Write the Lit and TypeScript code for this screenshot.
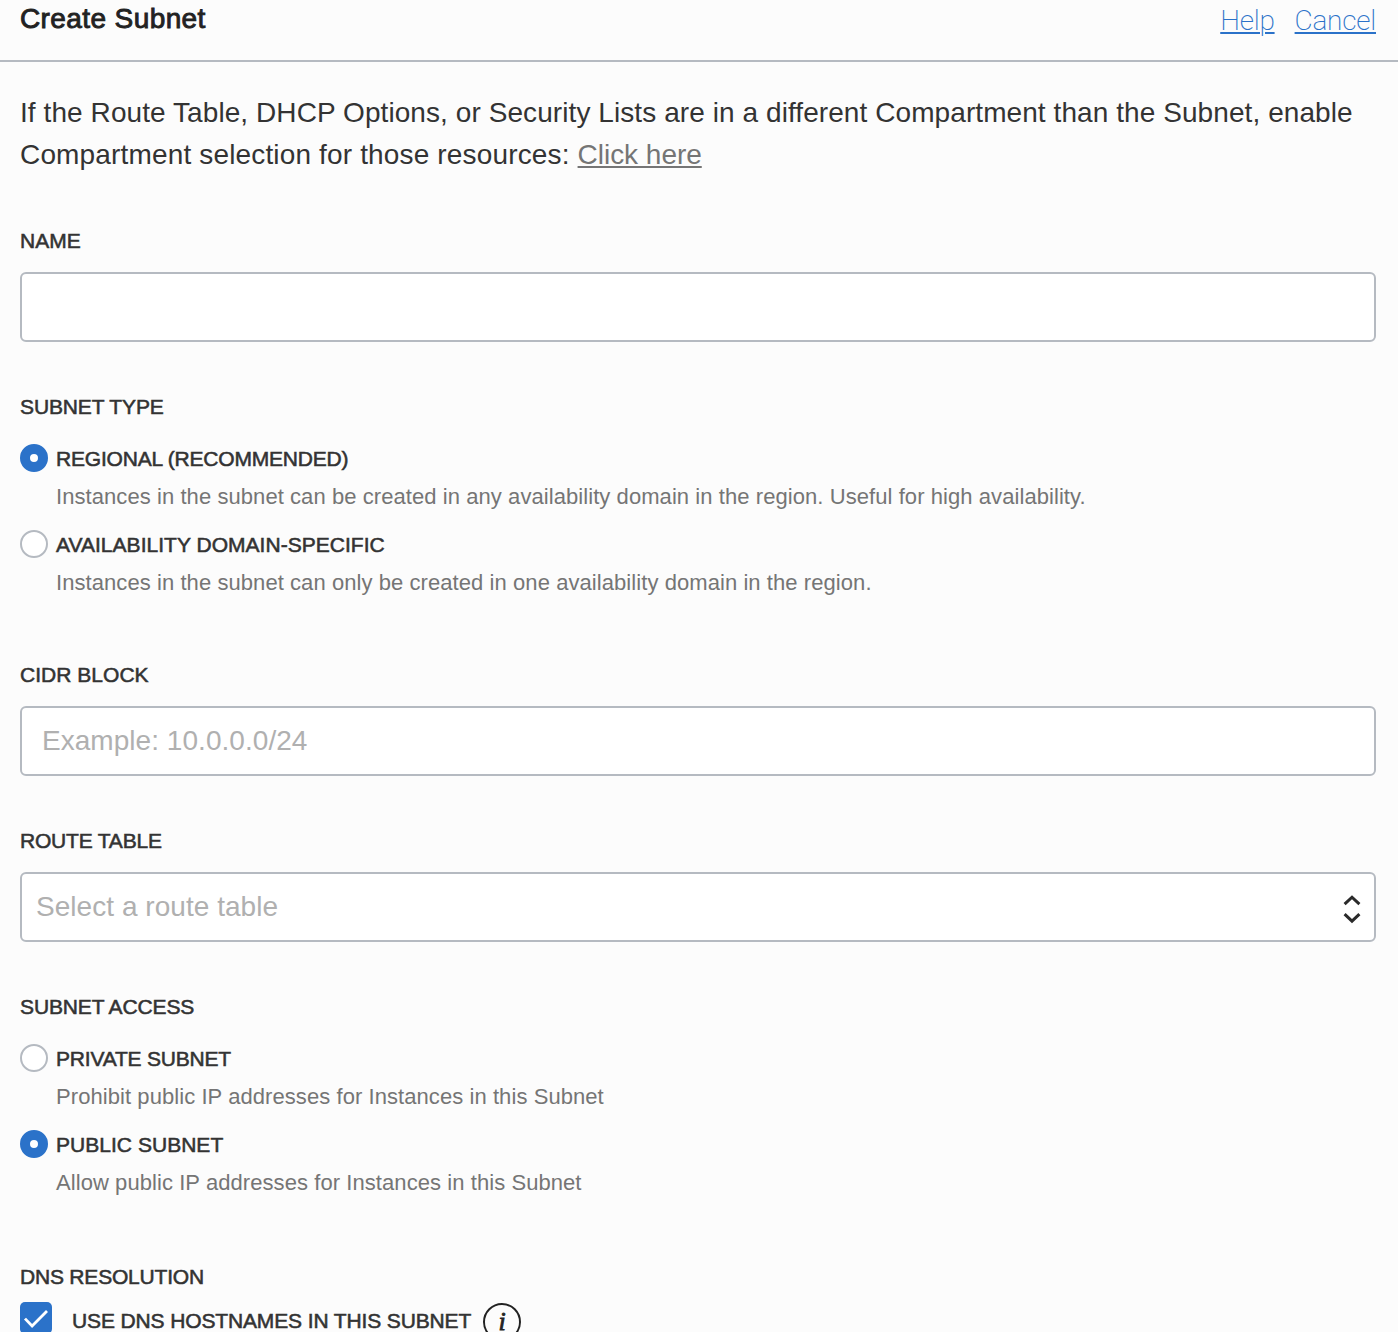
import { LitElement, html, css, svg, nothing } from 'lit';
import { customElement, property, state } from 'lit/decorators.js';
import { classMap } from 'lit/directives/class-map.js';

interface Choice {
  id: string;
  label: string;
  hint: string;
  tracking: '' | 'tight' | 'snug';
}

const subnetTypes: Choice[] = [
  {
    id: 'regional',
    label: 'REGIONAL (RECOMMENDED)',
    hint: 'Instances in the subnet can be created in any availability domain in the region. Useful for high availability.',
    tracking: 'tight',
  },
  {
    id: 'ad',
    label: 'AVAILABILITY DOMAIN-SPECIFIC',
    hint: 'Instances in the subnet can only be created in one availability domain in the region.',
    tracking: '',
  },
];

const accessTypes: Choice[] = [
  {
    id: 'private',
    label: 'PRIVATE SUBNET',
    hint: 'Prohibit public IP addresses for Instances in this Subnet',
    tracking: 'tight',
  },
  {
    id: 'public',
    label: 'PUBLIC SUBNET',
    hint: 'Allow public IP addresses for Instances in this Subnet',
    tracking: '',
  },
];

const labelStyles = css`
  .label {
    font-size: 21px;
    line-height: 24px;
    color: #333;
    -webkit-text-stroke: 0.55px #333;
    white-space: nowrap;
    letter-spacing: 0.03px;
  }
  .snug {
    letter-spacing: -0.13px;
  }
  .tight {
    letter-spacing: -0.2px;
  }
`;

@customElement('radio-group')
export class RadioGroup extends LitElement {
  @property({ attribute: false }) choices: Choice[] = [];
  @property() value = '';

  static styles = [
    labelStyles,
    css`
      :host {
        display: flex;
        flex-direction: column;
        gap: 21px;
      }
      .choice {
        display: grid;
        grid-template-columns: 28px 1fr;
        column-gap: 8px;
        row-gap: 13px;
        cursor: pointer;
      }
      .dot {
        box-sizing: border-box;
        width: 28px;
        height: 28px;
        border: 2px solid #b5bac1;
        border-radius: 50%;
        background: #fff;
      }
      .dot.on {
        border: 10px solid #2b72c9;
      }
      .label {
        line-height: 28px;
        padding-top: 1px;
        height: 27px;
      }
      .hint {
        grid-column: 2;
        font-size: 22px;
        line-height: 24px;
        letter-spacing: 0.07px;
        color: #757575;
        white-space: nowrap;
      }
    `,
  ];

  render() {
    return this.choices.map(
      (c) => html`
        <div class="choice" @click=${() => (this.value = c.id)}>
          <span class=${classMap({ dot: true, on: c.id === this.value })}></span>
          <span class=${classMap({ label: true, tight: c.tracking === 'tight', snug: c.tracking === 'snug' })}>${c.label}</span>
          <span class="hint">${c.hint}</span>
        </div>
      `,
    );
  }
}

@customElement('app-root')
export class AppRoot extends LitElement {
  @state() private dns = true;

  static styles = [
    labelStyles,
    css`
      :host {
        display: block;
        box-sizing: border-box;
        height: 1332px;
        overflow: hidden;
        background: #fcfcfc;
        color: #333;
        font-family: 'Liberation Sans', Arial, sans-serif;
      }
      .header {
        box-sizing: border-box;
        display: flex;
        justify-content: space-between;
        height: 62px;
        padding: 0 22px 0 20px;
        border-bottom: 2px solid #b5bac1;
      }
      .title {
        margin: 0;
        padding-top: 3px;
        font-size: 28px;
        font-weight: 400;
        line-height: 32px;
        letter-spacing: 0.4px;
        color: #222;
        -webkit-text-stroke: 0.9px #222;
      }
      .links {
        display: flex;
        gap: 20px;
        padding-top: 5px;
      }
      .link {
        font-family: Roboto, sans-serif;
        font-size: 28px;
        font-weight: 200;
        line-height: 32px;
        letter-spacing: -0.25px;
        color: #2b72c9;
        text-decoration: underline;
        text-decoration-thickness: 2px;
        text-underline-offset: 2px;
      }
      .intro {
        margin: 0;
        padding: 30px 20px 0;
        height: 84px;
        font-size: 28px;
        line-height: 42px;
        letter-spacing: 0.077px;
        white-space: nowrap;
      }
      .second {
        letter-spacing: 0.155px;
      }
      .here {
        color: #757575;
        letter-spacing: -0.03px;
        text-decoration: underline;
        text-decoration-thickness: 2px;
        text-underline-offset: 2px;
      }
      .form {
        display: flex;
        flex-direction: column;
        gap: 53px;
        padding: 53px 22px 0 20px;
      }
      .field {
        display: flex;
        flex-direction: column;
        gap: 19px;
      }
      .choices {
        gap: 25px;
        margin-bottom: 15px;
      }
      .choices.last {
        margin-bottom: 17px;
      }
      .box {
        box-sizing: border-box;
        display: flex;
        align-items: center;
        justify-content: space-between;
        height: 70px;
        padding: 0 20px;
        border: 2px solid #b5bac1;
        border-radius: 6px;
        background: #fff;
        color: #b0b0b0;
        font-size: 28px;
        line-height: 32px;
        letter-spacing: 0.04px;
      }
      .select {
        padding: 0 13px 0 14px;
      }
      .chevrons {
        width: 18px;
        height: 32px;
        padding-top: 4px;
      }
      .dns {
        gap: 13px;
      }
      .row {
        display: flex;
        height: 30px;
      }
      .check {
        width: 32px;
        height: 32px;
        margin-right: 20px;
      }
      .row .label {
        padding-top: 7px;
      }
      .info {
        width: 40px;
        height: 40px;
        margin-left: 11px;
      }
      .glyph {
        font: italic 400 26px 'Liberation Serif', serif;
        fill: #222;
        stroke: #222;
        stroke-width: 0.8px;
      }
    `,
  ];

  render() {
    return html`
      <header class="header">
        <h1 class="title">Create Subnet</h1>
        <nav class="links"><a class="link">Help</a><a class="link">Cancel</a></nav>
      </header>
      <p class="intro">
        If the Route Table, DHCP Options, or Security Lists are in a different Compartment than the Subnet, enable<br />
        <span class="second">Compartment selection for those resources: </span><a class="here">Click here</a>
      </p>
      <main class="form">
        <section class="field">
          <span class="label">NAME</span>
          <div class="box"></div>
        </section>
        <section class="field choices">
          <span class="label snug">SUBNET TYPE</span>
          <radio-group .choices=${subnetTypes} value="regional"></radio-group>
        </section>
        <section class="field">
          <span class="label">CIDR BLOCK</span>
          <div class="box">Example: 10.0.0.0/24</div>
        </section>
        <section class="field">
          <span class="label tight">ROUTE TABLE</span>
          <div class="box select">
            Select a route table
            <svg class="chevrons" viewBox="0 0 18 32" fill="none" stroke="#2a2a2a" stroke-width="3">
              <path d="M1.6 11.2 9 4.2l7.4 7M1.6 21.2 9 28.2l7.4-7" />
            </svg>
          </div>
        </section>
        <section class="field choices last">
          <span class="label snug">SUBNET ACCESS</span>
          <radio-group .choices=${accessTypes} value="public"></radio-group>
        </section>
        <section class="field dns">
          <span class="label tight">DNS RESOLUTION</span>
          <div class="row">
            <svg class="check" viewBox="0 0 32 32" fill="none" @click=${() => (this.dns = !this.dns)}>
              <rect width="32" height="32" rx="5" fill="#2b72c9" />
              ${this.dns
                ? svg`<path d="M5 16.6 12.1 24 27 9" stroke="#fff" stroke-width="2.8" />`
                : nothing}
            </svg>
            <span class="label snug">USE DNS HOSTNAMES IN THIS SUBNET</span>
            <svg class="info" viewBox="0 0 40 40">
              <circle cx="20" cy="20" r="18" fill="none" stroke="#222" stroke-width="2" />
              <text class="glyph" x="20" y="27.6" text-anchor="middle">i</text>
            </svg>
          </div>
        </section>
      </main>
    `;
  }
}
